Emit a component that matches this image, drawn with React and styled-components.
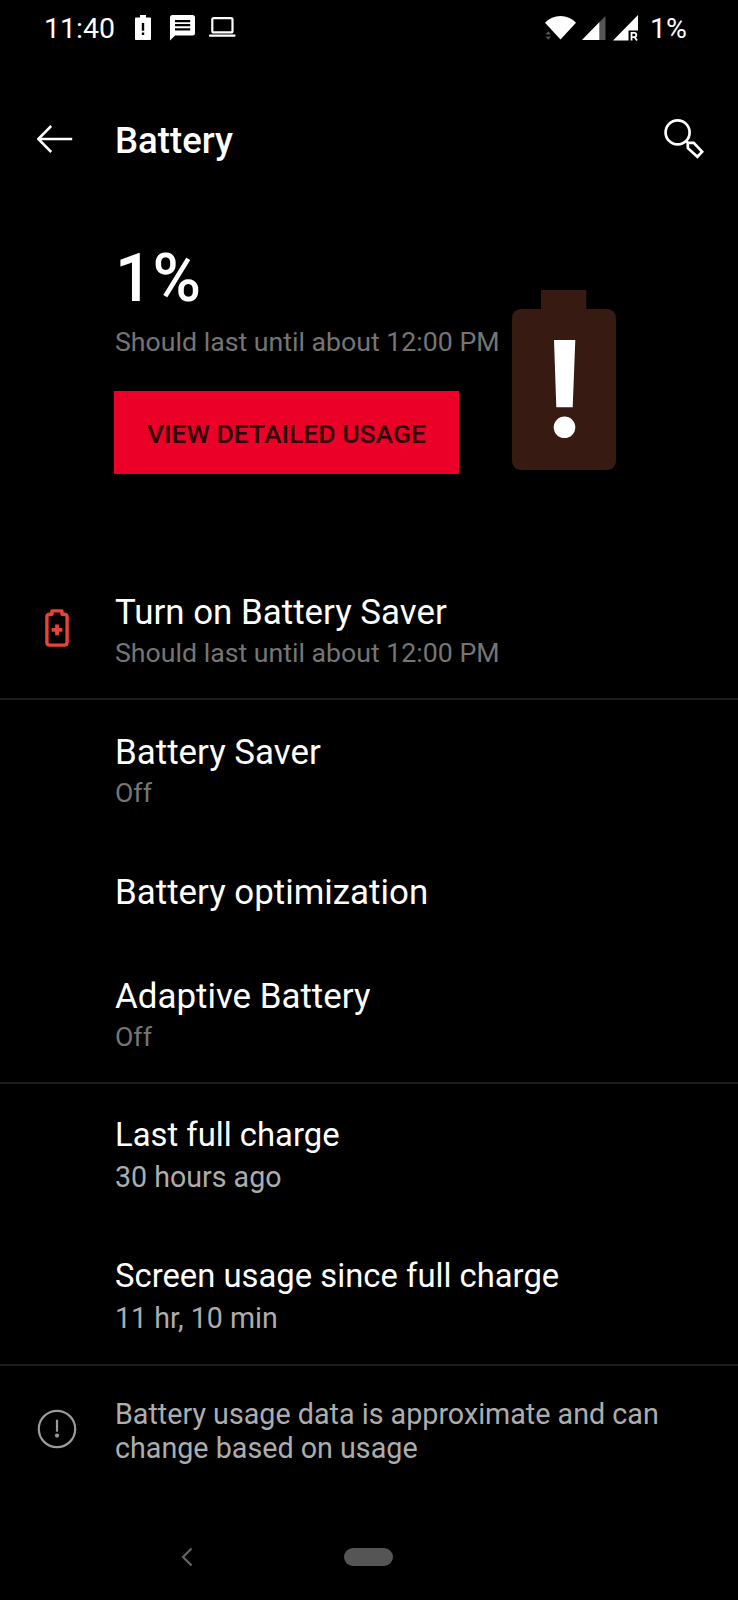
import React from 'react';
import styled, {createGlobalStyle} from 'styled-components';

const GlobalStyle = createGlobalStyle`
  * {
    box-sizing: border-box;
  }
  body {
    margin: 0;
    background: #000;
    font-family: Roboto, "Noto Sans", sans-serif;
    color: #fff;
  }
  svg {
    display: block;
    flex: none;
  }
`;

function BatteryAlertIcon () {
    return (
        <svg width="21" height="26" viewBox="0 0 21 26">
            <path fill="#fff" fillRule="evenodd" d="M5 0h6v2.500h4.200q.8 0 .8.800v21q0 .8-.8.800H.8q-.8 0-.8-.8V3.300Q0 2.500.8 2.500H5zM6.800 8v7.800h2.400V8zM6.800 17.600v2.400h2.400v-2.400z"/>
        </svg>
    )
}

function MessageIcon () {
    return (
        <svg width="25" height="26" viewBox="0 0 25 26">
            <path fill="#fff" fillRule="evenodd" d="M2.500 0h20q2.500 0 2.500 2.500v15.500q0 2.500-2.500 2.500H5L0 25.500V2.500Q0 0 2.500 0zM5 5v2.200h15.200V5zM5 9v2.200h15.200V9zM5 13.200v2.200h15.200v-2.200z"/>
        </svg>
    )
}

function LaptopIcon () {
    return (
        <svg width="27" height="22" viewBox="0 0 27 22">
            <rect x="3.300" y="1.200" width="20.200" height="14.200" rx="1.500" fill="none" stroke="#fff" strokeWidth="2.200"/>
            <rect x="0" y="17.400" width="26.500" height="2.400" rx=".8" fill="#fff"/>
        </svg>
    )
}

function WifiIcon () {
    return (
        <svg width="31" height="24" viewBox="0 0 31 24">
            <path fill="#fff" d="M0 6.700Q6.500 0 15.500 0T31 6.700L15.500 23.500z"/>
            <path fill="#555" d="M.5 18.500L3.300 15.200 6 18.500zM.5 20.500h5.500L3.300 23.800z"/>
        </svg>
    )
}

function SignalIcon () {
    return (
        <svg width="25" height="24" viewBox="0 0 25 24">
            <path fill="#555" d="M23.500 0v24H0z"/>
            <path fill="#fff" d="M17.300 6.300V24H0z"/>
        </svg>
    )
}

function RoamingIcon () {
    return (
        <svg width="26" height="27" viewBox="0 0 26 27">
            <path fill="#fff" d="M25 0v15.500H15.500V25.500H0z"/>
            <path fill="none" stroke="#fff" strokeWidth="1.800" d="M18.500 25.500v-7.600h2.700a2 2 0 0 1 0 4.200h-2.700M21.500 22l2.500 3.500"/>
        </svg>
    )
}

function BackIcon () {
    return (
        <svg width="36" height="28" viewBox="0 0 36 28" fill="none" stroke="#fff" strokeWidth="2.500">
            <path d="M14.200 1L1.300 14l12.900 13M1.300 14H35.200"/>
        </svg>
    )
}

function SearchIcon () {
    return (
        <svg width="40" height="40" viewBox="0 0 40 40" fill="none" stroke="#fff" strokeWidth="2.700">
            <circle cx="13.600" cy="13.400" r="12"/>
            <path d="M21.800 21.800l2.200 2M23.700 23.600l6 .2 8.500 9-4.800 5-9.500-8.600z"/>
        </svg>
    )
}

function LowBatteryIcon () {
    return (
        <svg width="104" height="180" viewBox="0 0 104 180">
            <path fill="#371a11" d="M29 0h45.300v19H94q10 0 10 10v141q0 10-10 10H10q-10 0-10-10V29q0-10 10-10h19z"/>
            <path fill="#fff" d="M42 50h21.300l-2.600 67.300H44.300z"/>
            <circle cx="52.500" cy="137.300" r="10.800" fill="#fff"/>
        </svg>
    )
}

function SaverIcon () {
    return (
        <svg width="24" height="38" viewBox="0 0 24 38">
            <path fill="none" stroke="#ea4335" strokeWidth="3.400" strokeLinejoin="round" d="M7 1.900h10v3.300h2.300q2.800 0 2.800 2.800v25.300q0 2.800-2.800 2.800H4.700q-2.800 0-2.800-2.800V8q0-2.800 2.800-2.800H7z"/>
            <path fill="none" stroke="#ea4335" strokeWidth="3.800" d="M12 15.500v10.800M6.600 20.900h10.800"/>
        </svg>
    )
}

function InfoIcon () {
    return (
        <svg width="40" height="40" viewBox="0 0 40 40">
            <circle cx="20" cy="20" r="18.200" fill="none" stroke="#9a9a9a" strokeWidth="2.200"/>
            <path fill="#9a9a9a" d="M18.900 10.700h2.200v12h-2.200z"/>
            <circle cx="20" cy="26.600" r="2.100" fill="#9a9a9a"/>
        </svg>
    )
}

function App () {
    return (
        <Screen>
            <GlobalStyle/>
            <StatusBar>
                <StatusText>11:40</StatusText>
                <Notifications>
                    <BatteryAlertIcon/>
                    <MessageIcon/>
                    <LaptopIcon/>
                </Notifications>
                <Signals>
                    <WifiIcon/>
                    <SignalIcon/>
                    <RoamingIcon/>
                </Signals>
                <StatusText>1%</StatusText>
            </StatusBar>

            <AppBar>
                <BackIcon/>
                <PageTitle>Battery</PageTitle>
                <SearchIcon/>
            </AppBar>

            <Summary>
                <SummaryInfo>
                    <Level>1%</Level>
                    <Subtitle>Should last until about 12:00 PM</Subtitle>
                    <UsageButton>View detailed usage</UsageButton>
                </SummaryInfo>
                <LowBatteryIcon/>
            </Summary>

            <Section>
                <Row>
                    <IconSlot $lift={7}><SaverIcon/></IconSlot>
                    <div>
                        <Title>Turn on Battery Saver</Title>
                        <Subtitle>Should last until about 12:00 PM</Subtitle>
                    </div>
                </Row>
            </Section>

            <Section>
                <Row>
                    <IconSlot/>
                    <div>
                        <Title>Battery Saver</Title>
                        <Subtitle>Off</Subtitle>
                    </div>
                </Row>
                <Row>
                    <IconSlot/>
                    <Title>Battery optimization</Title>
                </Row>
                <Row>
                    <IconSlot/>
                    <div>
                        <Title>Adaptive Battery</Title>
                        <Subtitle>Off</Subtitle>
                    </div>
                </Row>
            </Section>

            <Section>
                <Row>
                    <IconSlot/>
                    <div>
                        <StatTitle>Last full charge</StatTitle>
                        <StatValue>30 hours ago</StatValue>
                    </div>
                </Row>
                <Row>
                    <IconSlot/>
                    <div>
                        <StatTitle>Screen usage since full charge</StatTitle>
                        <StatValue>11 hr, 10 min</StatValue>
                    </div>
                </Row>
            </Section>

            <Footer>
                <IconSlot $lift={5}><InfoIcon/></IconSlot>
                <FooterText>Battery usage data is approximate and can change based on usage</FooterText>
            </Footer>

            <NavBar>
                <svg width="12" height="20" viewBox="0 0 12 20" fill="none" stroke="#646464" strokeWidth="2.200">
                    <path d="M10.500 1.500L2 10l8.500 8.500"/>
                </svg>
                <HomePill/>
            </NavBar>
        </Screen>
    )
}

const Screen = styled.div`
  display: flex;
  flex-direction: column;
  width: 738px;
  height: 1600px;
  background: #000;
  overflow: hidden;
`
const StatusBar = styled.div`
  display: flex;
  align-items: center;
  height: 56px;
  padding: 0 51px 0 44px;
`
const StatusText = styled.div`
  padding-top: 2px;
  font-size: 28.500px;
  line-height: 56px;
`
const Notifications = styled.div`
  display: flex;
  align-items: center;
  gap: 14px;
  flex: 1;
  margin-left: 20px;
`
const Signals = styled.div`
  display: flex;
  align-items: center;
  gap: 6px;
  margin-right: 11px;
`
const AppBar = styled.div`
  display: flex;
  align-items: center;
  height: 168px;
  padding: 0 34px 0 37px;
  > svg {
    margin-bottom: 2px;
  }
`
const PageTitle = styled.div`
  flex: 1;
  margin-left: 42px;
  font-size: 36.600px;
  font-weight: 500;
`
const Summary = styled.div`
  display: flex;
  height: 336px;
  padding: 14px 0 0 115px;
  > svg {
    margin-top: 52px;
  }
`
const SummaryInfo = styled.div`
  display: flex;
  flex-direction: column;
  align-items: flex-start;
  width: 397px;
  white-space: nowrap;
`
const Level = styled.div`
  height: 84px;
  font-size: 66px;
  font-weight: 500;
  line-height: 82px;
`
const UsageButton = styled.button`
  width: 345px;
  height: 83px;
  margin-top: 32px;
  margin-left: -1px;
  padding: 2px 0 0;
  border: none;
  background: #eb0028;
  color: #2f0008;
  font-family: inherit;
  font-size: 26.500px;
  font-weight: 500;
  text-transform: uppercase;
`
const Row = styled.div`
  display: flex;
  min-height: 104px;
  padding: 32px 0 30px;
`
const Section = styled.div`
  border-bottom: 2px solid #1c1c1c;
  ${Row}:last-child {
    padding-bottom: 28px;
  }
`
const IconSlot = styled.div`
  display: flex;
  align-items: center;
  justify-content: center;
  flex: none;
  width: 115px;
  padding-right: 1px;
  padding-bottom: ${props => props.$lift || 0}px;
`
const Title = styled.div`
  font-size: 34.900px;
  line-height: 41px;
`
const Subtitle = styled.div`
  padding-top: 3px;
  font-size: 26.700px;
  line-height: 34px;
  color: #757575;
`
const StatTitle = styled.div`
  font-size: 32.800px;
  line-height: 39px;
`
const StatValue = styled.div`
  padding-top: 4px;
  font-size: 28.600px;
  line-height: 36px;
  color: #adadad;
`
const Footer = styled.div`
  display: flex;
  padding: 32px 60px 0 0;
`
const FooterText = styled.div`
  font-size: 28.700px;
  line-height: 33.500px;
  color: #adadad;
`
const NavBar = styled.div`
  display: flex;
  align-items: center;
  height: 86px;
  margin-top: auto;
  padding-left: 181px;
`
const HomePill = styled.div`
  width: 49px;
  height: 18px;
  margin-left: 151px;
  border-radius: 9px;
  background: #555;
`
export default App;
